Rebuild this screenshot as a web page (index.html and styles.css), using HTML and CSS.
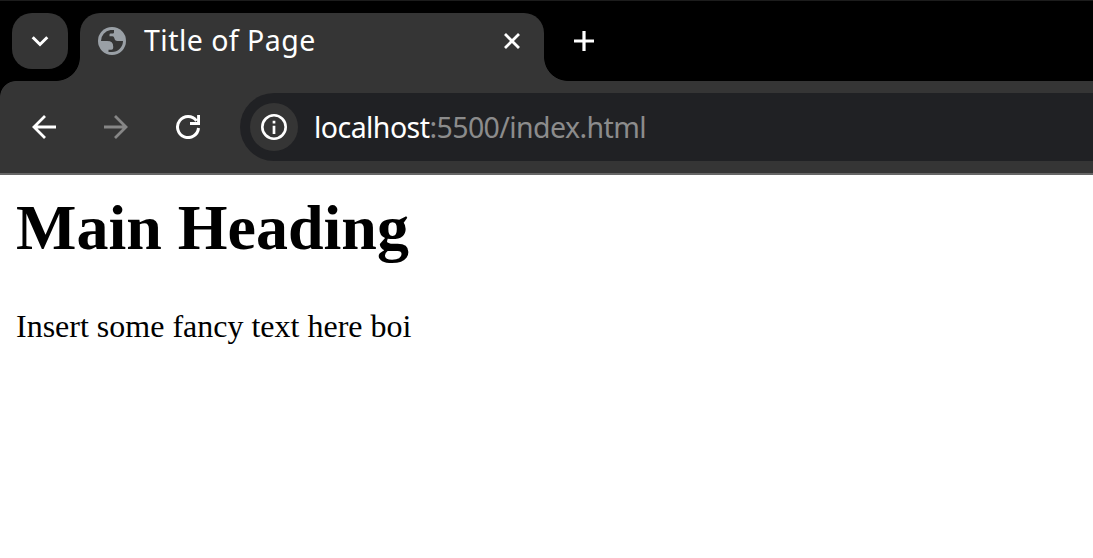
FILE: index.html
```html
<!DOCTYPE html>
<html lang="en">
<head>
<meta charset="utf-8">
<title>Title of Page</title>
<link rel="stylesheet" href="styles.css">
</head>
<body>
<div class="browser">
  <header class="tab-strip">
    <button class="tab-search" aria-label="Search tabs">
      <svg width="24" height="24" viewBox="0 0 24 24"><path d="M4.7 8.2 12 15.5l7.3-7.3" fill="none" stroke="#fff" stroke-width="3"/></svg>
    </button>
    <div class="tab">
      <svg class="globe" width="28" height="28" viewBox="0 0 28 28">
        <circle cx="14" cy="14" r="14" fill="#9aa0a6"/>
        <path d="M3 14A11 11 0 0 1 12.5 3.1H16V5.5Q16 6.6 14.8 6.6H12.6Q11.5 6.6 11.5 7.8V9.2H14.5Q16 9.2 16.3 11Q16.8 14 19.4 14H25A11 11 0 0 1 14 25H10.5V22.8H13.4Q15.2 22.8 15.2 21V19.4Q15.2 14 9.2 14Z" fill="#353535"/>
      </svg>
      <span class="tab-title">Title of Page</span>
      <svg class="close" width="20" height="20" viewBox="0 0 20 20"><path d="m3 3 14 14M17 3 3 17" fill="none" stroke="#fff" stroke-width="2.8"/></svg>
    </div>
    <svg class="new-tab" width="20" height="20" viewBox="0 0 20 20"><path d="M10 0v20M0 10h20" fill="none" stroke="#fff" stroke-width="3.2"/></svg>
  </header>
  <nav class="toolbar">
    <div class="nav-icons">
      <svg width="24" height="24" viewBox="0 0 24 24"><path d="M24 12H2M13 1 2 12l11 11" fill="none" stroke="#fff" stroke-width="2.8"/></svg>
      <svg width="24" height="24" viewBox="0 0 24 24"><path d="M0 12h22M11 1l11 11-11 11" fill="none" stroke="#868686" stroke-width="2.8"/></svg>
      <svg width="24" height="24" viewBox="0 0 24 24"><path d="M22.5 13A10.5 10.5 0 1 1 20.5 5.8M22.6 0v8.5H14" fill="none" stroke="#fff" stroke-width="3"/></svg>
    </div>
    <div class="address">
      <span class="site-info">
        <svg width="26" height="26" viewBox="0 0 26 26"><circle cx="13" cy="13" r="11.7" fill="none" stroke="#fff" stroke-width="2.6"/><path d="M13 11.7V20M13 6.8v2.7" stroke="#fff" stroke-width="2.7"/></svg>
      </span>
      <span class="url"><span class="host">localhost</span><span class="path">:5500/index.html</span></span>
    </div>
  </nav>
  <main class="page">
    <h1 class="heading">Main Heading</h1>
    <p class="text">Insert some fancy text here boi</p>
  </main>
</div>
</body>
</html>
```
FILE: styles.css
```css
body { margin: 0; background: #fff; overflow: hidden; }
.browser { height: 558px; background: #fff; }
.tab-strip { box-sizing: border-box; height: 81px; padding: 12px 0 0 12px; border-top: 1px solid #1c1c1c; background: #000; display: flex; align-items: flex-start; }
.tab-search { width: 56px; height: 56px; padding: 0; border: 0; border-radius: 20px; background: #353535; display: flex; align-items: center; justify-content: center; }
.tab { position: relative; box-sizing: border-box; width: 464px; height: 68px; margin-left: 12px; padding: 0 22px 12px 18px; border-radius: 20px 20px 0 0; background: #353535; display: flex; align-items: center; }
.tab::before, .tab::after { content: ""; position: absolute; bottom: 0; width: 24px; height: 24px; }
.tab::before { right: 100%; background: radial-gradient(circle at 0 0, transparent 23.5px, #353535 24.3px); }
.tab::after { left: 100%; background: radial-gradient(circle at 100% 0, transparent 23.5px, #353535 24.3px); }
.tab-title { margin: 0 0 2px 18px; font: 28.5px/40px "Noto Sans", sans-serif; letter-spacing: 0.47px; color: #fff; white-space: nowrap; }
.close { margin-left: auto; }
.new-tab { margin: 18px 0 0 30px; }
.toolbar { box-sizing: border-box; height: 94px; border-bottom: 2px solid #666; background: radial-gradient(circle at 16px 16px, #353535 15.5px, #000 16.3px) 0 0 / 16px 16px no-repeat, #353535; display: flex; align-items: center; }
.nav-icons { width: 208px; padding-left: 32px; display: flex; gap: 48px; flex: none; }
.address { box-sizing: border-box; flex: 1; height: 68px; padding-left: 10px; border-radius: 34px 0 0 34px; background: #202124; display: flex; align-items: center; }
.site-info { width: 48px; height: 48px; border-radius: 50%; background: #353535; display: flex; align-items: center; justify-content: center; }
.url { margin: 0 0 1px 16px; font: 28.5px/40px "Noto Sans", sans-serif; color: #8c8c8c; white-space: nowrap; }
.host { color: #fff; letter-spacing: -0.55px; }
.path { letter-spacing: -0.6px; }
.page { padding: 16px; font-family: "Liberation Serif", serif; color: #000; }
.heading { margin: 0; font-size: 64px; line-height: 74px; font-weight: bold; }
.text { margin: 43px 0 0; font-size: 32px; line-height: 36px; }
```
